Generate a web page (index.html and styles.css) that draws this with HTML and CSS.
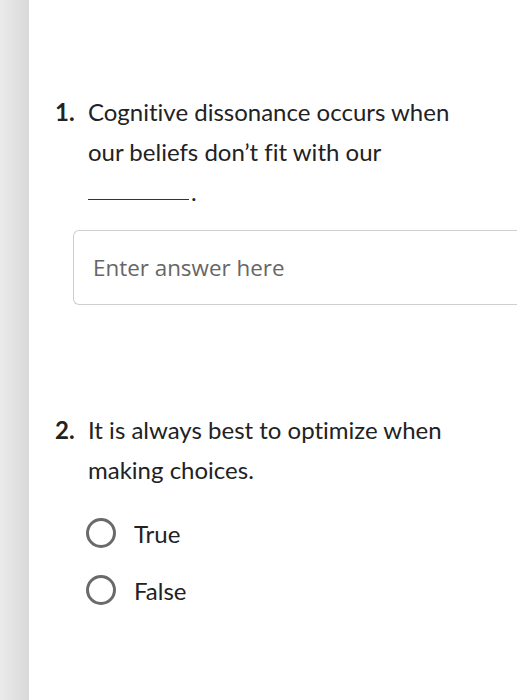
FILE: index.html
```html
<!DOCTYPE html>
<html>
<head>
<meta charset="utf-8">
<link rel="stylesheet" href="styles.css">
</head>
<body>
<div class="page">
  <div class="strip"></div>
  <main class="main">
    <section class="question q1">
      <div class="qhead">
        <span class="num">1.</span>
        <p class="qtext">Cognitive dissonance occurs when our beliefs don’t fit with our <span class="blankline"><span class="blank"></span>.</span></p>
      </div>
      <div class="answer">Enter answer here</div>
    </section>
    <section class="question q2">
      <div class="qhead">
        <span class="num">2.</span>
        <p class="qtext">It is always best to optimize when making choices.</p>
      </div>
      <div class="options">
        <div class="option"><span class="radio"></span><span class="label">True</span></div>
        <div class="option"><span class="radio"></span><span class="label">False</span></div>
      </div>
    </section>
  </main>
</div>
</body>
</html>
```

FILE: styles.css
```css
html, body {
  margin: 0;
  padding: 0;
  background: #fff;
  overflow: hidden;
}
body {
  font-family: Lato, "Open Sans", sans-serif;
  color: #222;
  font-variant-ligatures: none;
}
.page {
  display: flex;
  min-height: 700px;
  width: 517px;
}
.strip {
  width: 29px;
  flex: none;
  background: linear-gradient(to right, #ebebeb, #d9d9d9);
}
.main {
  flex: 1;
  padding: 92px 0 0 26px;
  min-width: 0;
  overflow: hidden;
}
.qhead {
  display: flex;
  font-size: 24px;
  line-height: 40px;
}
.num {
  width: 33px;
  flex: none;
  font-weight: 700;
}
.qtext {
  margin: 0;
  width: 370px;
}
.blankline {
  display: flex;
  align-items: baseline;
  height: 40px;
}
.blank {
  display: inline-block;
  width: 101px;
  height: 0;
  border-bottom: 1.5px solid #333;
  align-self: flex-start;
  margin-top: 27px;
  margin-right: 2px;
}
.answer {
  margin: 18px 0 0 18px;
  width: 480px;
  height: 75px;
  box-sizing: border-box;
  border: 1px solid #cfcfcf;
  border-right: none;
  border-radius: 6px 0 0 6px;
  padding-left: 19px;
  display: flex;
  align-items: center;
  font-family: "Open Sans", sans-serif;
  font-size: 22.4px;
  color: #666;
}
.q2 {
  margin-top: 105px;
}
.options {
  margin: 28px 0 0 31px;
  display: flex;
  flex-direction: column;
  gap: 27px;
}
.option {
  display: flex;
  align-items: center;
  height: 30px;
  gap: 18px;
}
.radio {
  width: 30px;
  height: 30px;
  box-sizing: border-box;
  border: 3px solid #6a6a6a;
  border-radius: 50%;
}
.label {
  font-size: 24px;
}
```
